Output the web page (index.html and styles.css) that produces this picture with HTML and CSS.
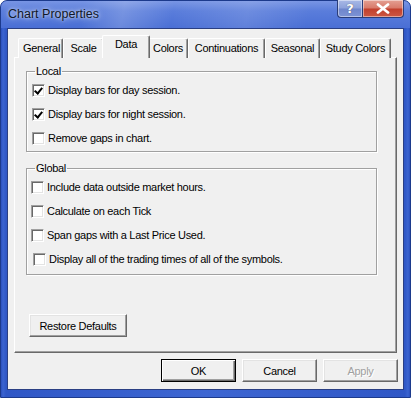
FILE: index.html
```html
<!DOCTYPE html>
<html lang="en">
<head>
    <meta charset="UTF-8">
    <title>Chart Properties</title>
    <link rel="stylesheet" href="styles.css">
</head>
<body>
    <div class="window">
        <div class="titlebar">
            <span class="title">Chart Properties</span>
            <div class="caption-buttons">
                <button class="cap help">?</button>
                <button class="cap close">
                    <svg width="14" height="11" viewBox="0 0 14 11"><path d="M2 1.5 L12 9.5 M12 1.5 L2 9.5" stroke="#fff" stroke-width="2.8" stroke-linecap="round"/></svg>
                </button>
            </div>
        </div>

        <div class="client">
            <div class="tabs">
                <div class="tab first">General</div>
                <div class="tab">Scale</div>
                <div class="tab active">Data</div>
                <div class="tab">Colors</div>
                <div class="tab">Continuations</div>
                <div class="tab">Seasonal</div>
                <div class="tab">Study Colors</div>
            </div>

            <div class="panel">
                <fieldset class="group local">
                    <legend>Local</legend>
                    <label class="row"><span class="check on"></span>Display bars for day session.</label>
                    <label class="row"><span class="check on"></span>Display bars for night session.</label>
                    <label class="row"><span class="check"></span>Remove gaps in chart.</label>
                </fieldset>

                <fieldset class="group global">
                    <legend>Global</legend>
                    <label class="row"><span class="check"></span>Include data outside market hours.</label>
                    <label class="row"><span class="check"></span>Calculate on each Tick</label>
                    <label class="row"><span class="check"></span>Span gaps with a Last Price Used.</label>
                    <label class="row shifted"><span class="check"></span>Display all of the trading times of all of the symbols.</label>
                </fieldset>

                <button class="btn restore">Restore Defaults</button>
            </div>

            <div class="footer">
                <button class="btn default">OK</button>
                <button class="btn">Cancel</button>
                <button class="btn" disabled>Apply</button>
            </div>
        </div>
    </div>
</body>
</html>
```

FILE: styles.css
```css
* {
    margin: 0;
    padding: 0;
    box-sizing: border-box;
}
body {
    width: 411px;
    height: 398px;
    background: #fff;
    font-family: 'Liberation Sans', Arial, sans-serif;
    font-size: 11px;
    letter-spacing: -0.3px;
    color: #000;
    overflow: hidden;
}
.window {
    width: 411px;
    height: 398px;
    display: flex;
    flex-direction: column;
    border: 1px solid #1c3a8c;
    border-radius: 7px 7px 0 0;
    background: linear-gradient(90deg, #2a4fbd 0, #3b64d0 2px, #2f57c6 5px, #3d66d2 50%, #2f57c6 calc(100% - 5px), #3b64d0 calc(100% - 2px), #2a4fbd 100%);
}
.titlebar {
    height: 27px;
    display: flex;
    align-items: flex-start;
    padding-left: 7px;
    border-radius: 6px 6px 0 0;
    background:
        linear-gradient(100deg, rgba(255,255,255,0) 20%, rgba(255,255,255,0.18) 30%, rgba(255,255,255,0) 42%, rgba(255,255,255,0.12) 60%, rgba(255,255,255,0) 75%),
        linear-gradient(180deg, #7895e4 0, #5a7ddb 10px, #4a6fd5 27px);
}
.title {
    margin-top: 6px;
    font-family: 'Liberation Sans', Arial, sans-serif;
    font-size: 12.5px;
    letter-spacing: 0;
    color: #101828;
    text-shadow: 0 0 6px rgba(255,255,255,0.8), 0 0 3px rgba(255,255,255,0.6);
}
.caption-buttons {
    margin-left: auto;
    margin-right: 6px;
    margin-top: -1px;
    display: flex;
}
.cap {
    height: 18px;
    border: 1px solid #2b3d78;
    border-top: none;
    color: #fff;
    display: flex;
    align-items: center;
    justify-content: center;
    box-shadow: inset 0 0 0 1px rgba(255,255,255,0.45);
}
.help {
    width: 25px;
    border-radius: 0 0 0 4px;
    border-right: none;
    background: linear-gradient(180deg, #a9b9e6 0, #8ea2db 8px, #6f86cc 9px, #7f95d6 18px);
    font-family: 'DejaVu Sans', sans-serif;
    font-weight: bold;
    font-size: 13px;
    text-shadow: 0 0 1px #334;
}
.close {
    width: 42px;
    border-radius: 0 0 4px 0;
    background: linear-gradient(180deg, #e4a093 0, #d87a6a 8px, #c2402d 9px, #cd5a46 18px);
}
.close svg {
    display: block;
}
.client {
    flex: 1;
    margin: 0 6px 7px 6px;
    background: #f0f0f0;
    border: 1px solid #2a3f83;
    display: flex;
    flex-direction: column;
    padding: 6px 6px 0 6px;
}
.tabs {
    display: flex;
    align-items: flex-end;
    height: 23px;
    margin-bottom: -1px;
    padding-left: 4px;
    position: relative;
    z-index: 1;
}
.tab {
    height: 20px;
    padding: 3px 4px 0 4px;
    background: #f0f0f0;
    border-top: 1px solid #fff;
    border-left: 1px solid #fff;
    border-right: 1px solid #696969;
    box-shadow: inset -1px 0 0 #a0a0a0;
    border-radius: 2px 2px 0 0;
    white-space: nowrap;
    text-align: center;
}
.tab.first {
    width: 45px;
}
.tab:nth-child(2) {
    width: 41px;
}
.tab:nth-child(4) {
    width: 40px;
}
.tab:nth-child(5) {
    width: 77px;
}
.tab:nth-child(6) {
    width: 55px;
}
.tab:nth-child(7) {
    width: 71px;
}
.tab.active {
    height: 23px;
    width: 48px;
    margin: 0 -2px;
    padding-top: 2px;
    position: relative;
    z-index: 2;
}
.panel {
    height: 296px;
    display: flex;
    flex-direction: column;
    align-items: flex-start;
    border-top: 1px solid #fff;
    border-left: 1px solid #fff;
    border-right: 1px solid #696969;
    border-bottom: 1px solid #696969;
    box-shadow: inset -1px -1px 0 #a0a0a0;
    padding: 0 17px 0 11px;
}
.group {
    width: 351px;
    border: 1px solid #a0a0a0;
    box-shadow: 1px 1px 0 #fff, inset 1px 1px 0 #fff;
    padding: 0 0 1px 5px;
}
.group legend {
    margin-left: 3px;
    padding: 0 1px;
    line-height: 13px;
}
.local {
    margin-top: 7px;
}
.global {
    margin-top: 10px;
    padding-bottom: 3px;
}
.row {
    height: 24px;
    display: flex;
    align-items: center;
    gap: 3px;
    white-space: nowrap;
}
.global .row {
    margin-left: -1px;
}
.global .row.shifted {
    margin-left: 1px;
}
.check {
    width: 13px;
    height: 13px;
    flex: none;
    position: relative;
    background: #fff;
    border-top: 1px solid #a0a0a0;
    border-left: 1px solid #a0a0a0;
    border-right: 1px solid #fff;
    border-bottom: 1px solid #fff;
    box-shadow: inset 1px 1px 0 #696969, inset -1px -1px 0 #e3e3e3;
}
.check.on::after {
    content: "";
    position: absolute;
    left: 3px;
    top: 1px;
    width: 3px;
    height: 6px;
    border-right: 2px solid #000;
    border-bottom: 2px solid #000;
    transform: rotate(40deg);
}
.btn {
    width: 75px;
    height: 23px;
    font-family: 'Liberation Sans', Arial, sans-serif;
    font-size: 11px;
    letter-spacing: -0.3px;
    color: #000;
    background: #f0f0f0;
    border-top: 1px solid #fff;
    border-left: 1px solid #fff;
    border-right: 1px solid #696969;
    border-bottom: 1px solid #696969;
    box-shadow: inset -1px -1px 0 #a0a0a0, inset 1px 1px 0 #e3e3e3;
}
.btn.restore {
    width: 98px;
    margin-top: 39px;
    margin-left: 3px;
}
.btn.default {
    border: 1px solid #000;
    box-shadow: inset 1px 1px 0 #fff, inset -1px -1px 0 #696969, inset -2px -2px 0 #a0a0a0;
}
.btn:disabled {
    color: #a0a0a0;
    text-shadow: 1px 1px 0 #fff;
}
.footer {
    display: flex;
    justify-content: flex-end;
    gap: 6px;
    margin-top: 6px;
    margin-right: -1px;
}
```
